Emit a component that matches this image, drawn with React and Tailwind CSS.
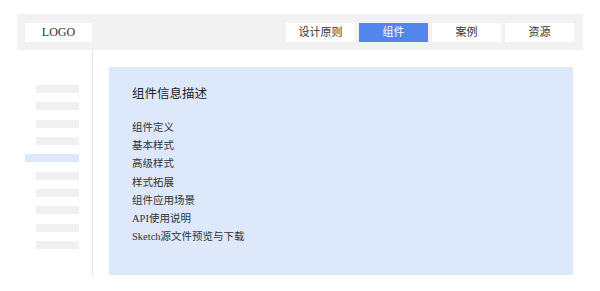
const navItems = ['设计原则', '组件', '案例', '资源']

const links = [
  '组件定义',
  '基本样式',
  '高级样式',
  '样式拓展',
  '组件应用场景',
  'API使用说明',
  'Sketch源文件预览与下载',
]

export default function App() {
  const font = { fontFamily: '"Liberation Serif", "Noto Sans CJK SC", serif' }

  return (
    <div className="w-[600px] h-[291px] bg-white pt-[14px] px-[17px]" style={font}>
      <header className="flex items-center h-[36px] bg-[#f2f2f2] pl-2 pr-[9px]">
        <div className="w-[67px] h-[19px] bg-white flex items-center justify-center text-[12px] text-[#333]">
          LOGO
        </div>
        <nav className="ml-auto flex gap-1">
          {navItems.map((item) => (
            <div
              key={item}
              className={
                item === '组件'
                  ? 'w-[69px] h-[19px] flex items-center justify-center text-[11px] bg-[#5286ec] text-white'
                  : 'w-[69px] h-[19px] flex items-center justify-center text-[11px] bg-white text-[#333]'
              }
            >
              {item}
            </div>
          ))}
        </nav>
      </header>

      <div className="flex">
        <aside className="w-[76px] h-[225px] border-r border-[#e3e3e3] pt-[35px] flex flex-col gap-[9.33px]">
          {Array.from({ length: 10 }).map((_, i) =>
            i === 4 ? (
              <div key={i} className="h-2 ml-2 w-[54px] bg-[#dde9fb]" />
            ) : (
              <div key={i} className="h-2 ml-[19px] w-[43px] bg-[#f0f0f0]" />
            )
          )}
        </aside>

        <main className="ml-4 pt-[17px]">
          <div className="w-[464px] h-[208px] bg-[#dde9fb] pl-[23px] pt-[19px]">
            <h1 className="text-[12.5px] leading-[16px] text-[#222]">组件信息描述</h1>
            <ul className="mt-[17px] text-[10.5px] leading-[18.2px] text-[#333]">
              {links.map((l) => (
                <li key={l}>{l}</li>
              ))}
            </ul>
          </div>
        </main>
      </div>
    </div>
  )
}
